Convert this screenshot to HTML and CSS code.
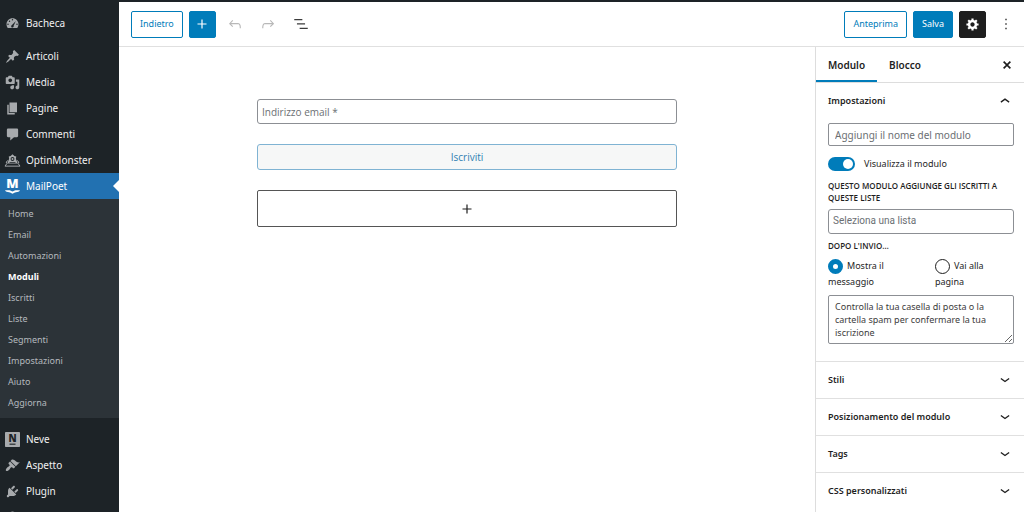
FILE: index.html
```html
<!DOCTYPE html>
<html lang="it">
<head>
<meta charset="utf-8">
<title>MailPoet – Moduli</title>
<link rel="stylesheet" href="styles.css">
</head>
<body>
<div class="app">
  <nav class="menu" aria-label="Menu principale">
    <ul class="menu-group">
      <li><a class="menu-item" href="#"><svg class="menu-icon" viewBox="0 0 20 20" aria-hidden="true"><path d="M3.760 16h12.480c1.100-1.370 1.760-3.110 1.760-5 0-4.420-3.580-8-8-8s-8 3.580-8 8c0 1.890.66 3.630 1.760 5zM10 4c.55 0 1 .45 1 1s-.45 1-1 1-1-.45-1-1 .45-1 1-1zM6 6c.55 0 1 .45 1 1s-.45 1-1 1-1-.45-1-1 .45-1 1-1zM14.500 6.500l-3 6.500a1.700 1.700 0 1 1-2.200-1zM4 10c.55 0 1 .45 1 1s-.45 1-1 1-1-.45-1-1 .45-1 1-1zm12 0c.55 0 1 .45 1 1s-.45 1-1 1-1-.45-1-1 .45-1 1-1z" fill-rule="evenodd"/></svg>Bacheca</a></li>
    </ul>
    <ul class="menu-group content-group">
      <li><a class="menu-item" href="#"><svg class="menu-icon" viewBox="0 0 20 20" aria-hidden="true"><path d="M10.440 3.020l1.820-1.820 6.360 6.350-1.830 1.820c-1.050-.68-2.480-.57-3.410.36l-.75.75c-.92.93-1.040 2.350-.35 3.410l-1.830 1.820-2.410-2.410-2.800 2.790c-.42.42-3.380 2.710-3.800 2.290s1.860-3.390 2.280-3.810l2.790-2.790L4.100 9.360l1.830-1.820c1.050.69 2.480.57 3.400-.36l.75-.75c.93-.92 1.050-2.350.36-3.410z"/></svg>Articoli</a></li>
      <li><a class="menu-item" href="#"><svg class="menu-icon" viewBox="0 0 20 20" aria-hidden="true"><path d="M13 11V4c0-.55-.45-1-1-1h-1.670L9 1H5L3.670 3H2c-.55 0-1 .45-1 1v7c0 .55.45 1 1 1h10c.55 0 1-.45 1-1zM7 4.500c1.380 0 2.500 1.120 2.500 2.500S8.380 9.500 7 9.500 4.500 8.380 4.500 7 5.620 4.500 7 4.500zM14.500 6H19v10.500c0 1.380-1.120 2.500-2.500 2.500S14 17.880 14 16.500s1.120-2.500 2.500-2.500V9h-2zM9.500 13.500h2.500v3c0 1.380-1.120 2.500-2.500 2.500S7 17.880 7 16.500 8.120 14 9.500 14z" fill-rule="evenodd"/></svg>Media</a></li>
      <li><a class="menu-item" href="#"><svg class="menu-icon" viewBox="0 0 20 20" aria-hidden="true"><path d="M6 15V2h10v13H6zm-1 1h8v2H3V5h2v11z"/></svg>Pagine</a></li>
      <li><a class="menu-item" href="#"><svg class="menu-icon" viewBox="0 0 20 20" aria-hidden="true"><path d="M4 2h12q1.500 0 1.500 1.500v8.500q0 1.500-1.500 1.500h-4l-5 4.500v-4.500H4q-1.500 0-1.500-1.500V3.500Q2.500 2 4 2z"/></svg>Commenti</a></li>
      <li><a class="menu-item" href="#"><svg class="menu-icon" viewBox="0 0 20 20" aria-hidden="true"><path d="M5 4.500L7.500 4 10 1.500 12.500 4l2.500.5-.5 3L17 14H3l2.500-6.500z"/><path d="M4 10l-2.500 2 1 2-2.500 3.500h20L17.500 14l1-2-2.500-2" fill="none" stroke="currentColor" stroke-width="1.300"/><circle class="cut" cx="10" cy="8" r="2.600"/><circle cx="10" cy="8" r="1.300"/><path class="cut" d="M6 12h8v1H6z"/></svg>OptinMonster</a></li>
      <li class="menu-current"><a class="menu-item" href="#" aria-current="true"><svg class="menu-icon" viewBox="0 0 20 20" aria-hidden="true"><text class="mark" x="10" y="12" text-anchor="middle" font-size="17">M</text><path d="M0 15h5c1.500 0 2.500.5 5 1.500 2.500-1 3.500-1.500 5-1.500h5c-1 2-3 2.500-5.500 2.500-1.500 0-2.500 1-4.500 2-2-1-3-2-4.500-2C3 17.500 1 17 0 15z"/></svg>MailPoet</a></li>
    </ul>
    <ul class="submenu">
      <li><a href="#">Home</a></li>
      <li><a href="#">Email</a></li>
      <li><a href="#">Automazioni</a></li>
      <li><a class="submenu-current" href="#" aria-current="page">Moduli</a></li>
      <li><a href="#">Iscritti</a></li>
      <li><a href="#">Liste</a></li>
      <li><a href="#">Segmenti</a></li>
      <li><a href="#">Impostazioni</a></li>
      <li><a href="#">Aiuto</a></li>
      <li><a href="#">Aggiorna</a></li>
    </ul>
    <ul class="menu-group">
      <li><a class="menu-item" href="#"><svg class="menu-icon" viewBox="0 0 20 20" aria-hidden="true"><rect width="20" height="20" rx="1"/><text class="mark cut" x="10" y="13.500" text-anchor="middle" font-size="13">N</text><path class="cut" d="M6 15.500h8V17H6z"/></svg>Neve</a></li>
      <li><a class="menu-item" href="#"><svg class="menu-icon" viewBox="0 0 20 20" aria-hidden="true"><path d="M14.480 11.060L7.410 3.990l1.500-1.500c.5-.56 2.300-.47 3.510.32 1.210.8 1.430 1.280 2.910 2.100 1.180.64 2.450 1.260 4.450.85zm-.71.71L6.700 4.700 4.930 6.470c-.39.39-.39 1.020 0 1.410l1.060 1.060c.39.39.39 1.030 0 1.420-.6.6-1.430 1.110-2.210 1.690-.35.26-.7.53-1.010.84C1.430 14.230.4 16.080 1.400 17.070c.99 1 2.840-.03 4.180-1.360.31-.31.58-.66.85-1.020.57-.78 1.080-1.610 1.690-2.210.39-.39 1.020-.39 1.410 0l1.060 1.060c.39.39 1.020.39 1.410 0z"/></svg>Aspetto</a></li>
      <li><a class="menu-item" href="#"><svg class="menu-icon" viewBox="0 0 20 20" aria-hidden="true"><path d="M13.110 4.360L9.870 7.600 8 5.730l3.240-3.240c.35-.34 1.050-.2 1.560.32.52.51.66 1.210.31 1.550zm-8 1.770l.91-1.120 9.010 9.010-1.190.84c-.71.71-2.630 1.160-3.820 1.160H6.140L4.900 17.260c-.59.59-1.540.59-2.120 0-.59-.58-.59-1.530 0-2.120l1.240-1.240v-3.880c0-1.130.4-3.190 1.090-3.890zm7.260 3.970l3.240-3.240c.34-.35 1.040-.21 1.550.31.52.51.66 1.210.31 1.550l-3.240 3.250z"/></svg>Plugin</a></li>
      <li><a class="menu-item" href="#" aria-label="Utenti"><svg class="menu-icon" viewBox="0 0 20 20" aria-hidden="true"><circle cx="10" cy="6" r="4"/><path d="M3 18c0-9 14-9 14 0z"/></svg></a></li>
    </ul>
  </nav>

  <div class="editor">
    <header class="toolbar">
      <div class="tools">
        <button class="button" type="button">Indietro</button>
        <button class="button primary square" type="button" aria-label="Aggiungi blocco"><svg class="icon" viewBox="0 0 24 24"><path d="M18 11.200h-5.200V6h-1.600v5.200H6v1.600h5.200V18h1.600v-5.200H18z"/></svg></button>
        <button class="icon-button" type="button" aria-label="Annulla" disabled><svg class="icon" viewBox="0 0 24 24"><path d="M18.300 11.700c-.6-.6-1.400-.9-2.300-.9H6.700l2.900-3.300-1.100-1-4.500 5L8.500 16l1-1-2.700-2.700H16c.5 0 .9.2 1.300.5 1 1 1 3.400 1 4.500v.3h1.500v-.2c0-1.500 0-4.300-1.500-5.700z"/></svg></button>
        <button class="icon-button" type="button" aria-label="Ripeti" disabled><svg class="icon" viewBox="0 0 24 24"><path d="M15.600 6.500l-1.100 1 2.900 3.300H8c-.9 0-1.700.3-2.300.9-1.400 1.500-1.400 4.200-1.400 5.600v.2h1.500v-.3c0-1.100 0-3.500 1-4.500.3-.3.7-.5 1.300-.5h9.200L14.500 15l1.100 1.100 4.600-4.600-4.600-5z"/></svg></button>
        <button class="icon-button" type="button" aria-label="Vista elenco"><svg class="icon" viewBox="0 0 24 24"><path d="M13.800 5.200H3V7h10.800zM10.200 17v1.800H21V17zM17.400 11H6.600v1.800h10.800z"/></svg></button>
      </div>
      <div class="actions">
        <button class="button" type="button">Anteprima</button>
        <button class="button primary" type="button">Salva</button>
        <button class="button dark square" type="button" aria-label="Impostazioni"><svg class="icon-small" viewBox="0 0 19 21"><path fill-rule="evenodd" d="M18 12h-2.180c-.17.7-.44 1.350-.81 1.930l1.540 1.540-2.100 2.100-1.540-1.540c-.58.36-1.230.63-1.910.79V19H8v-2.180c-.68-.16-1.330-.43-1.910-.79l-1.540 1.540-2.120-2.120 1.540-1.540c-.36-.58-.63-1.230-.79-1.910H1V9.030h2.170c.16-.7.44-1.350.8-1.940L2.430 5.550l2.100-2.100 1.540 1.540c.58-.37 1.240-.64 1.930-.81V2h3v2.180c.68.16 1.330.43 1.910.79l1.540-1.540 2.120 2.120-1.540 1.540c.36.59.64 1.240.8 1.940H18V12zm-8.500 1.500c1.660 0 3-1.340 3-3s-1.340-3-3-3-3 1.340-3 3 1.340 3 3 3z"/></svg></button>
        <button class="icon-button" type="button" aria-label="Opzioni"><svg class="icon" viewBox="0 0 24 24"><path d="M11 5h2v2h-2zM11 11h2v2h-2zM11 17h2v2h-2z"/></svg></button>
      </div>
    </header>

    <div class="workspace">
      <main class="canvas">
        <form class="form">
          <input class="form-email" type="email" placeholder="Indirizzo email *" aria-label="Indirizzo email">
          <button class="form-submit" type="button">Iscriviti</button>
          <button class="form-add" type="button" aria-label="Aggiungi blocco"><svg class="icon" viewBox="0 0 24 24"><path d="M18 11.200h-5.200V6h-1.600v5.200H6v1.600h5.200V18h1.600v-5.200H18z"/></svg></button>
        </form>
      </main>

      <aside class="panel">
        <div class="tabs">
          <button class="tab tab-active" type="button">Modulo</button>
          <button class="tab" type="button">Blocco</button>
          <button class="close" type="button" aria-label="Chiudi"><svg class="icon" viewBox="0 0 24 24"><path d="M7.500 7.500l9 9m0-9l-9 9" fill="none" stroke="currentColor" stroke-width="2.200"/></svg></button>
        </div>
        <section class="section">
          <button class="section-title" type="button" aria-expanded="true">Impostazioni<svg class="icon" viewBox="0 0 24 24"><path d="M6.500 13.500l5.500-4 5.500 4" fill="none" stroke="currentColor" stroke-width="1.800"/></svg></button>
          <div class="section-body">
            <input class="name-input" type="text" placeholder="Aggiungi il nome del modulo" aria-label="Nome del modulo">
            <label class="toggle-row"><input class="toggle" type="checkbox" role="switch" checked>Visualizza il modulo</label>
            <label class="caption" for="lists">Questo modulo aggiunge gli iscritti a queste liste</label>
            <input class="list-input" id="lists" type="text" placeholder="Seleziona una lista">
            <fieldset class="after">
              <legend class="caption">Dopo l'invio…</legend>
              <div class="choices">
                <label><input class="radio" type="radio" name="after" checked>Mostra il messaggio</label>
                <label><input class="radio" type="radio" name="after">Vai alla pagina</label>
              </div>
            </fieldset>
            <textarea class="message" rows="3" aria-label="Messaggio">Controlla la tua casella di posta o la cartella spam per confermare la tua iscrizione</textarea>
          </div>
        </section>
        <section class="section"><button class="section-title" type="button" aria-expanded="false">Stili<svg class="icon" viewBox="0 0 24 24"><path d="M6.500 10l5.500 4 5.500-4" fill="none" stroke="currentColor" stroke-width="1.800"/></svg></button></section>
        <section class="section"><button class="section-title" type="button" aria-expanded="false">Posizionamento del modulo<svg class="icon" viewBox="0 0 24 24"><path d="M6.500 10l5.500 4 5.500-4" fill="none" stroke="currentColor" stroke-width="1.800"/></svg></button></section>
        <section class="section"><button class="section-title" type="button" aria-expanded="false">Tags<svg class="icon" viewBox="0 0 24 24"><path d="M6.500 10l5.500 4 5.500-4" fill="none" stroke="currentColor" stroke-width="1.800"/></svg></button></section>
        <section class="section"><button class="section-title" type="button" aria-expanded="false">CSS personalizzati<svg class="icon" viewBox="0 0 24 24"><path d="M6.500 10l5.500 4 5.500-4" fill="none" stroke="currentColor" stroke-width="1.800"/></svg></button></section>
      </aside>
    </div>
  </div>
</div>
</body>
</html>
```

FILE: styles.css
```css
* { box-sizing: border-box; }

body {
  margin: 0;
  background: #fff;
  color: #1e1e1e;
  font: 9px/16px "Noto Sans", "Open Sans", sans-serif;
}

button, input, textarea { font: inherit; color: inherit; margin: 0; }
button { padding: 0; border: 0; background: none; cursor: pointer; }
svg { fill: currentColor; flex: none; overflow: visible; }
ul { margin: 0; padding: 0; list-style: none; }
a { color: inherit; text-decoration: none; }

.app {
  display: flex;
  height: 100vh;
  overflow: hidden;
  border-top: 2px solid #1d2327;
}

/* Admin menu */
.menu {
  flex: none;
  width: 119px;
  overflow: hidden;
  background: #1d2327;
  color: #f0f0f1;
}
.menu-group { padding-top: 8px; font-size: 10px; }
.content-group { padding-top: 7px; }
.menu-item { display: flex; align-items: center; gap: 6px; height: 26px; padding-left: 5px; }
.menu-icon { width: 15px; height: 15px; color: #a7aaad; }
.menu-icon .cut { fill: #1d2327; }
.mark { font-family: "Open Sans", sans-serif; font-weight: 800; }
.menu-current { position: relative; background: #2271b1; color: #fff; }
.menu-current .menu-icon { color: #fff; }
.menu-current::after {
  content: "";
  position: absolute;
  right: 0;
  top: 7px;
  border: 6px solid transparent;
  border-left: 0;
  border-right-color: #fff;
}
.submenu { padding: 4px 0 5px 8px; background: #2c3338; color: #b4b9be; line-height: 21px; }
.submenu-current { color: #fff; font-weight: 700; }

/* Editor */
.editor { display: flex; flex-direction: column; flex: 1; min-width: 0; }
.toolbar {
  display: flex;
  justify-content: space-between;
  align-items: center;
  height: 45px;
  padding: 0 5px 0 12px;
  border-bottom: 1px solid #e0e0e0;
}
.tools, .actions { display: flex; align-items: center; gap: 6px; }
.button {
  display: flex;
  align-items: center;
  justify-content: center;
  height: 27px;
  padding: 0 8px;
  border: 1px solid #007cba;
  border-radius: 2px;
  color: #007cba;
}
.primary { background: #007cba; color: #fff; }
.dark { background: #1e1e1e; border-color: #1e1e1e; color: #fff; }
.square { width: 27px; padding: 0; }
.icon { width: 18px; height: 18px; }
.icon-small { width: 15px; height: 15px; }
.icon-button { display: flex; justify-content: center; width: 27px; color: #3c3c3c; }
.icon-button:disabled { color: #b8b8b8; }
.workspace { display: flex; flex: 1; min-height: 0; }
.canvas { flex: 1; padding: 52px 24px; }
.form {
  display: flex;
  flex-direction: column;
  gap: 20px;
  max-width: 420px;
  margin: 0 auto;
  font-family: "Open Sans", "Noto Sans", sans-serif;
  font-size: 10px;
}
.form-email { height: 25px; padding: 0 4px; border: 1px solid #8c8f94; border-radius: 3px; }
.form-submit { height: 26px; border: 1px solid #7fb3d3; border-radius: 3px; background: #f6f7f7; color: #2f7fb2; }
.form-add {
  display: flex;
  align-items: center;
  justify-content: center;
  height: 37px;
  border: 1px solid #555;
  border-radius: 2px;
}
::placeholder { color: #6b6f73; opacity: 1; }

/* Settings panel */
.panel { flex: none; width: 209px; overflow: hidden; border-left: 1px solid #ddd; }
.tabs { display: flex; height: 36px; padding-right: 8px; border-bottom: 1px solid #ddd; }
.tab { padding: 0 12px; font-size: 10px; font-weight: 600; }
.tab-active { box-shadow: inset 0 -2px #007cba; }
.close { display: flex; align-items: center; margin-left: auto; }
.section { padding: 0 10px 0 12px; border-bottom: 1px solid #e0e0e0; }
.section:last-child { border-bottom: 0; }
.section-title {
  display: flex;
  align-items: center;
  justify-content: space-between;
  width: 100%;
  height: 36px;
  font-weight: 600;
}
.section-body { display: flex; flex-direction: column; padding: 4px 0 17px; }
.name-input { height: 23px; padding: 0 6px; border: 1px solid #8c8f94; border-radius: 2px; font-size: 10px; }
.toggle-row { display: flex; align-items: center; gap: 9px; margin: 10px 0 8px; }
.toggle {
  appearance: none;
  display: flex;
  align-items: center;
  width: 27px;
  height: 14px;
  padding: 2px;
  border-radius: 7px;
  background: #007cba;
}
.toggle::before { content: ""; width: 10px; height: 10px; border-radius: 50%; background: #fff; }
.toggle:checked { justify-content: flex-end; }
.caption { font: 600 8px/12px "Open Sans", "Noto Sans", sans-serif; text-transform: uppercase; }
.list-input { height: 25px; margin-top: 5px; padding: 0 4px 3px; border: 1px solid #8c8f94; border-radius: 3px; font: 10px Roboto, sans-serif; }
.after { min-width: 0; margin: 6px 0 5px; padding: 0; border: 0; }
.after .caption { padding: 0; }
.choices { display: grid; grid-template-columns: 1fr 1fr; column-gap: 28px; margin-top: 6px; }
.radio {
  appearance: none;
  width: 15px;
  height: 15px;
  margin-right: 4px;
  border: 1px solid #1e1e1e;
  border-radius: 50%;
  vertical-align: middle;
}
.radio:checked { border: 5px solid #007cba; }
.message {
  display: block;
  width: 100%;
  padding: 4px 6px;
  border: 1px solid #8c8f94;
  border-radius: 2px;
  color: #3c3c3c;
  line-height: 13px;
  resize: vertical;
}
```
